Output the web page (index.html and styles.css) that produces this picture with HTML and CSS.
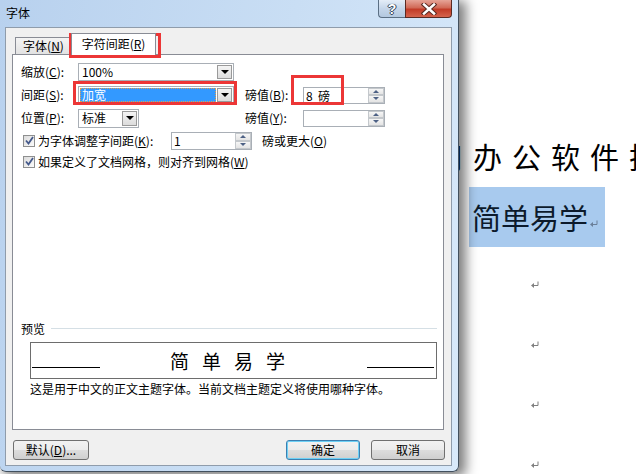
FILE: index.html
```html
<!DOCTYPE html>
<html lang="zh-CN">
  <head>
    <meta charset="UTF-8" />
    <title>字体</title>
    <link rel="stylesheet" href="styles.css">
  </head>
  <body>
    <div class="doc">
      <div class="doc-title">用办公软件技巧</div>
      <div class="doc-line">
        <span class="sel">简单易学<svg class="ret small" width="8" height="7" viewBox="0 0 8 7"><path d="M7 0.5V4.5H2" fill="none" stroke="#6a7f99"/><polygon points="0,4.5 3,2 3,7" fill="#6a7f99"/></svg></span>
      </div>
      <div class="para"><svg class="ret" width="8" height="7" viewBox="0 0 8 7"><path d="M7 0.5V4.5H2" fill="none" stroke="#7f7f7f"/><polygon points="0,4.5 3,2 3,7" fill="#7f7f7f"/></svg></div>
      <div class="para"><svg class="ret" width="8" height="7" viewBox="0 0 8 7"><path d="M7 0.5V4.5H2" fill="none" stroke="#7f7f7f"/><polygon points="0,4.5 3,2 3,7" fill="#7f7f7f"/></svg></div>
      <div class="para"><svg class="ret" width="8" height="7" viewBox="0 0 8 7"><path d="M7 0.5V4.5H2" fill="none" stroke="#7f7f7f"/><polygon points="0,4.5 3,2 3,7" fill="#7f7f7f"/></svg></div>
      <div class="para"><svg class="ret" width="8" height="7" viewBox="0 0 8 7"><path d="M7 0.5V4.5H2" fill="none" stroke="#7f7f7f"/><polygon points="0,4.5 3,2 3,7" fill="#7f7f7f"/></svg></div>
    </div>

    <div class="dialog">
      <div class="titlebar">
        <span class="title">字体</span>
        <div class="caption-btns">
          <span class="cap help">?</span>
          <span class="cap close">
            <svg width="18" height="12" viewBox="0 0 18 12">
              <path d="M4 1.5L14 10.5M14 1.5L4 10.5" stroke="#5a2a22" stroke-width="4.5" stroke-linecap="square"/>
              <path d="M4 1.5L14 10.5M14 1.5L4 10.5" stroke="#fff" stroke-width="2.5" stroke-linecap="square"/>
            </svg>
          </span>
        </div>
      </div>

      <div class="client">
        <div class="tabs">
          <div class="tab">字体(<u>N</u>)</div>
          <div class="tab active">字符间距(<u>R</u>)</div>
        </div>

        <div class="panel">
          <div class="grid">
            <label>缩放(<u>C</u>):</label>
            <div class="combo"><span class="val">100%</span><span class="drop"></span></div>
            <span></span><span></span><span></span>

            <label>间距(<u>S</u>):</label>
            <div class="combo"><span class="val focus">加宽</span><span class="drop"></span></div>
            <span></span>
            <label>磅值(<u>B</u>):</label>
            <div class="spin"><span class="val">8&nbsp;&nbsp;磅</span><span class="arrows"><i class="up"></i><i class="down"></i></span></div>

            <label>位置(<u>P</u>):</label>
            <div class="combo short"><span class="val">标准</span><span class="drop"></span></div>
            <span></span>
            <label>磅值(<u>Y</u>):</label>
            <div class="spin"><span class="val"></span><span class="arrows"><i class="up"></i><i class="down"></i></span></div>
          </div>

          <div class="check-row first">
            <span class="box"><svg width="9" height="9" viewBox="0 0 9 9"><path d="M1 4.5L3.5 7.5L8 1" fill="none" stroke="#44598b" stroke-width="1.8"/></svg></span>
            <span class="lbl">为字体调整字间距(<u>K</u>):</span>
            <div class="spin kern"><span class="val">1</span><span class="arrows"><i class="up"></i><i class="down"></i></span></div>
            <span class="after">磅或更大(<u>O</u>)</span>
          </div>
          <div class="check-row">
            <span class="box"><svg width="9" height="9" viewBox="0 0 9 9"><path d="M1 4.5L3.5 7.5L8 1" fill="none" stroke="#44598b" stroke-width="1.8"/></svg></span>
            <span>如果定义了文档网格，则对齐到网格(<u>W</u>)</span>
          </div>

          <div class="preview-head"><span>预览</span><i class="rule"></i></div>
          <div class="preview-box">
            <i class="baseline left"></i>
            <span class="sample">简单易学</span>
            <i class="baseline right"></i>
          </div>
          <p class="note">这是用于中文的正文主题字体。当前文档主题定义将使用哪种字体。</p>
        </div>

        <div class="buttons">
          <button class="btn">默认(<u>D</u>)...</button>
          <span class="spacer"></span>
          <button class="btn default">确定</button>
          <button class="btn">取消</button>
        </div>
      </div>

      <!-- red annotation boxes -->
      <div class="mark mark-tab"></div>
      <div class="mark mark-spacing"></div>
      <div class="mark mark-size"></div>
    </div>
  </body>
</html>
```

FILE: styles.css
```css
body {
  margin: 0;
  width: 636px;
  height: 474px;
  overflow: hidden;
  position: relative;
  background: #fff;
  font-family: "Noto Sans CJK SC", "Noto Sans", sans-serif;
  font-size: 12px;
  color: #000;
}
u {
  text-decoration: underline;
}

/* document behind the dialog */
.doc {
  display: flex;
  flex-direction: column;
  padding: 136px 0 0 434px;
  white-space: nowrap;
}
.doc-title {
  font-size: 29px;
  line-height: 40px;
  letter-spacing: 10px;
  color: #000;
}
.doc-line {
  margin-top: 11px;
  padding-left: 35px;
}
.sel {
  display: inline-flex;
  align-items: center;
  box-sizing: border-box;
  width: 136px;
  height: 60px;
  padding-left: 3px;
  background: #a8caee;
  font-size: 29px;
  color: #0c1a2c;
}
.ret.small {
  margin: 12px 0 0 2px;
}
.para {
  height: 60px;
  display: flex;
  align-items: center;
  padding-left: 97px;
}
.doc-line + .para {
  margin-top: 7px;
}

/* dialog window */
.dialog {
  position: absolute;
  left: 0;
  top: 0;
  width: 459px;
  height: 472px;
  box-sizing: border-box;
  background: linear-gradient(100deg, #b8d1ee, #c9def4 55%, #d8e9fa);
  border-right: 1px solid #42505e;
  border-bottom: 1px solid #42505e;
  border-radius: 0 0 6px 6px;
  box-shadow: 5px 3px 12px 2px rgba(0, 0, 0, 0.5);
}
.titlebar {
  height: 27px;
  display: flex;
  justify-content: space-between;
}
.title {
  padding-left: 6px;
  line-height: 25px;
}
.caption-btns {
  display: flex;
  height: 18px;
  margin-right: 6px;
}
.cap {
  display: flex;
  align-items: center;
  justify-content: center;
  box-sizing: border-box;
  height: 18px;
  border: 1px solid #5b6f84;
  border-top: none;
}
.help {
  width: 27px;
  border-radius: 0 0 0 4px;
  border-right: none;
  background: linear-gradient(#e4edf7, #c5d6ea 50%, #b3c8df);
  color: #fff;
  font-family: "Liberation Sans", sans-serif;
  font-weight: bold;
  font-size: 14px;
  text-shadow: 0 0 1px #2d3d52, 1px 0 0 #3a4a5e, -1px 0 0 #3a4a5e, 0 1px 0 #3a4a5e;
}
.close {
  width: 47px;
  border-radius: 0 0 4px 0;
  border-color: #5b2a22;
  background: linear-gradient(#e6a497, #d16a57 45%, #c23b27 55%, #d5634c);
}

.client {
  margin-left: 5px;
  width: 447px;
  height: 439px;
  box-sizing: border-box;
  border: 1px solid #8f9cab;
  background: #f0f0f0;
  display: flex;
  flex-direction: column;
}

/* tabs */
.tabs {
  display: flex;
  align-items: flex-end;
  height: 26px;
  padding-left: 9px;
}
.tab {
  height: 17px;
  box-sizing: border-box;
  width: 56px;
  border: 1px solid #898c95;
  border-bottom: none;
  border-right: none;
  background: linear-gradient(#f4f4f4, #e2e2e2);
  text-align: center;
  line-height: 16px;
}
.tab.active {
  width: 85px;
  height: 22px;
  line-height: 20px;
  margin-bottom: -1px;
  border-right: 1px solid #898c95;
  background: #fff;
  position: relative;
  z-index: 1;
}

.panel {
  margin-left: 6px;
  width: 432px;
  height: 376px;
  box-sizing: border-box;
  border: 1px solid #898c95;
  background: #fff;
  padding: 8px 0 0 8px;
  display: flex;
  flex-direction: column;
}
.grid {
  display: grid;
  grid-template-columns: 57px 156px 11px 58px 82px;
  grid-auto-rows: 18px;
  row-gap: 5px;
  align-items: center;
}
.grid label {
  line-height: 18px;
}

.combo {
  display: flex;
  height: 18px;
  box-sizing: border-box;
  border: 1px solid #a9afb6;
  background: #fff;
  padding: 1px;
}
.combo.short {
  width: 61px;
  height: 19px;
}
.combo .val {
  flex: 1;
  padding-left: 2px;
  line-height: 14px;
}
.combo .val.focus {
  background: #3399ff;
  color: #fff;
  outline: 1px dotted #e0a050;
  outline-offset: -1px;
  margin-right: 1px;
}
.drop {
  width: 15px;
  box-sizing: border-box;
  border: 1px solid #9a9a9a;
  background: linear-gradient(#f4f4f4, #dcdcdc);
  display: flex;
  align-items: center;
  justify-content: center;
}
.drop::after {
  content: "";
  border-left: 4px solid transparent;
  border-right: 4px solid transparent;
  border-top: 4px solid #000;
}

.spin {
  display: flex;
  height: 17px;
  box-sizing: border-box;
  border: 1px solid #a9afb6;
  background: #fff;
}
.spin .val {
  flex: 1;
  padding-left: 2px;
  line-height: 15px;
}
.arrows {
  width: 16px;
  display: flex;
  flex-direction: column;
}
.arrows i {
  flex: 1;
  box-sizing: border-box;
  border: 1px solid #c4c8cc;
  background: linear-gradient(#f6f6f6, #e4e4e4);
  display: flex;
  align-items: center;
  justify-content: center;
}
.arrows .up::after {
  content: "";
  border-left: 3px solid transparent;
  border-right: 3px solid transparent;
  border-bottom: 3px solid #4d6185;
}
.arrows .down::after {
  content: "";
  border-left: 3px solid transparent;
  border-right: 3px solid transparent;
  border-top: 3px solid #4d6185;
}

.check-row {
  display: flex;
  align-items: center;
  height: 17px;
  margin-top: 4px;
  padding-left: 2px;
}
.check-row.first {
  margin-top: 5px;
}
.box {
  width: 12px;
  height: 12px;
  box-sizing: border-box;
  border: 1px solid #8e8f8f;
  background: linear-gradient(135deg, #dcdcdc, #fbfbfb);
  display: flex;
  align-items: center;
  justify-content: center;
  margin-right: 3px;
}
.check-row .lbl {
  width: 133px;
}
.spin.kern {
  width: 81px;
  height: 18px;
}
.after {
  margin-left: 10px;
}

/* preview */
.preview-head {
  display: flex;
  align-items: center;
  margin-top: 151px;
  height: 14px;
  padding-right: 6px;
}
.rule {
  flex: 1;
  height: 1px;
  margin-left: 6px;
  background: #d5dfe5;
}
.preview-box {
  margin: 7px 0 0 9px;
  width: 407px;
  height: 37px;
  box-sizing: border-box;
  border: 1px solid #6d6d6d;
  display: flex;
  align-items: flex-end;
  padding: 0 2px 10px 1px;
}
.baseline {
  height: 1px;
  background: #000;
}
.baseline.left {
  width: 68px;
}
.baseline.right {
  width: 67px;
}
.sample {
  flex: 1;
  text-align: center;
  font-size: 19px;
  letter-spacing: 13px;
  line-height: 19px;
  margin-bottom: -2px;
  padding-left: 1px;
}
.note {
  margin: 3px 0 0 9px;
  line-height: 14px;
}

/* bottom buttons */
.buttons {
  display: flex;
  margin-top: 10px;
  padding: 0 6px 0 7px;
  gap: 11px;
}
.spacer {
  flex: 1;
}
.btn {
  height: 20px;
  width: 74px;
  padding: 0;
  box-sizing: border-box;
  border: 1px solid #707070;
  border-radius: 3px;
  background: linear-gradient(#f2f2f2 0%, #ebebeb 50%, #dddddd 51%, #cfcfcf 100%);
  font-family: inherit;
  font-size: 12px;
  color: #000;
  line-height: 16px;
}
.btn:first-child {
  width: 76px;
}
.btn.default {
  border-color: #3c7fb1;
  box-shadow: inset 0 0 0 1px #6dd0f5;
}

/* red annotation boxes */
.mark {
  position: absolute;
  box-sizing: border-box;
  border: 3px solid #ec3636;
}
.mark-tab {
  left: 69px;
  top: 33px;
  width: 92px;
  height: 25px;
}
.mark-spacing {
  left: 73px;
  top: 81px;
  width: 164px;
  height: 24px;
}
.mark-size {
  left: 291px;
  top: 75px;
  width: 53px;
  height: 30px;
}
```
